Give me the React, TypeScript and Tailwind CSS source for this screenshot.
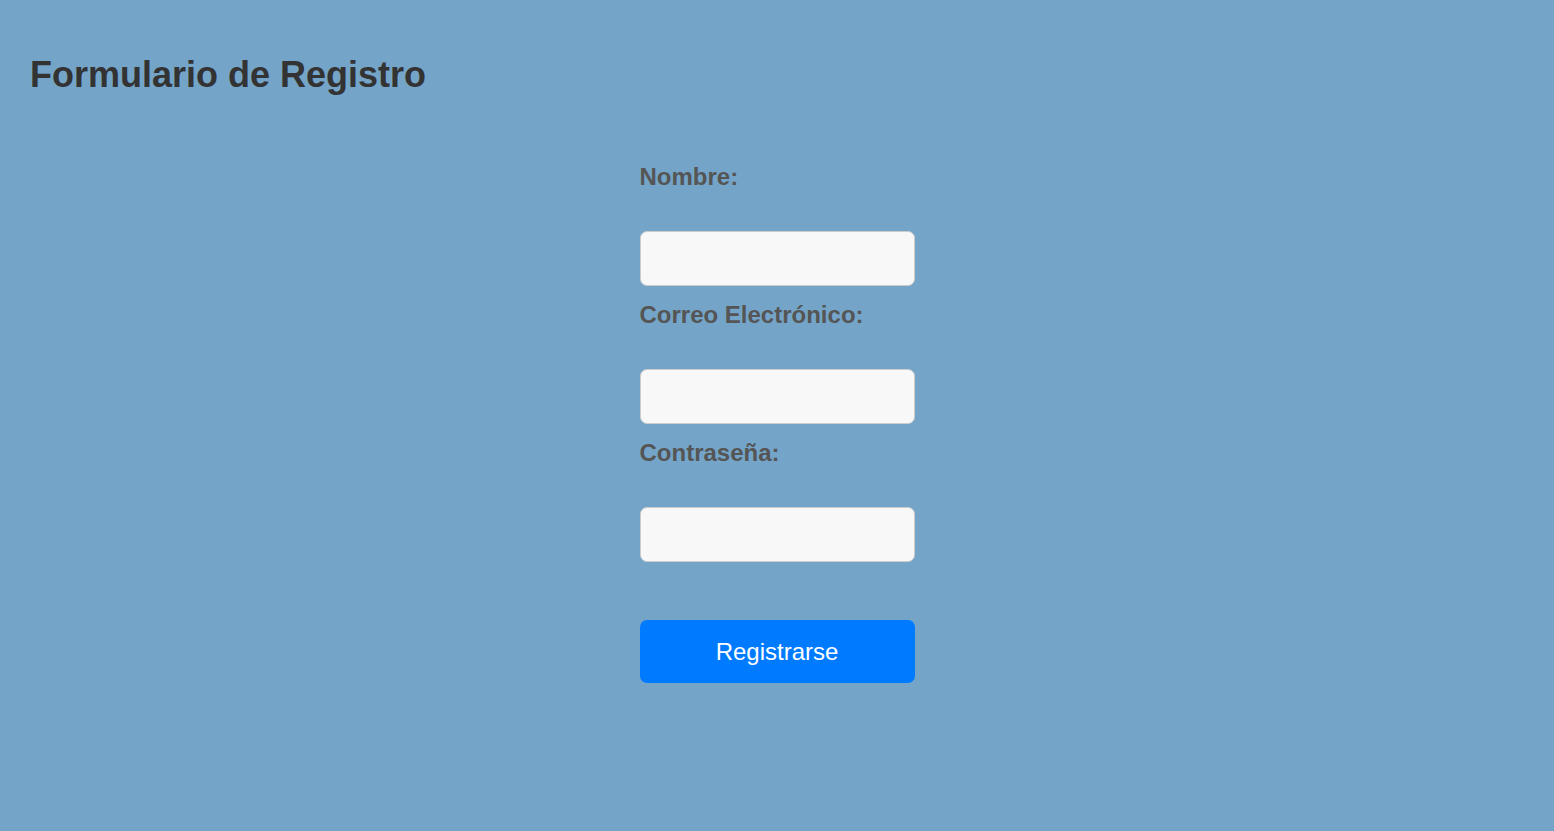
export default function App() {
  return (
    <div className="min-h-[831px] bg-[#74a5c9] px-[30px] pt-[55px] font-['Liberation_Sans',Arial,sans-serif]">
      <h1 className="text-[36px] leading-[40px] font-bold text-[#333333]">
        Formulario de Registro
      </h1>

      <form className="mx-auto mt-[68px] flex w-[275px] flex-col" onSubmit={(e) => e.preventDefault()}>
        <label htmlFor="nombre" className="block text-[24px] leading-[28px] font-bold text-[#555555]">
          Nombre:
        </label>
        <input
          id="nombre"
          type="text"
          className="mt-[40px] mb-[15px] h-[55px] w-full rounded-[7px] border border-[#cccccc] bg-[#f8f8f8] px-3 outline-none"
        />

        <label htmlFor="correo" className="block text-[24px] leading-[28px] font-bold text-[#555555]">
          Correo Electrónico:
        </label>
        <input
          id="correo"
          type="email"
          className="mt-[40px] mb-[15px] h-[55px] w-full rounded-[7px] border border-[#cccccc] bg-[#f8f8f8] px-3 outline-none"
        />

        <label htmlFor="pass" className="block text-[24px] leading-[28px] font-bold text-[#555555]">
          Contraseña:
        </label>
        <input
          id="pass"
          type="password"
          className="mt-[40px] h-[55px] w-full rounded-[7px] border border-[#cccccc] bg-[#f8f8f8] px-3 outline-none"
        />

        <button
          type="submit"
          className="mt-[58px] h-[63px] w-full rounded-[7px] bg-[#007bff] text-[24px] text-white"
        >
          Registrarse
        </button>
      </form>
    </div>
  );
}
